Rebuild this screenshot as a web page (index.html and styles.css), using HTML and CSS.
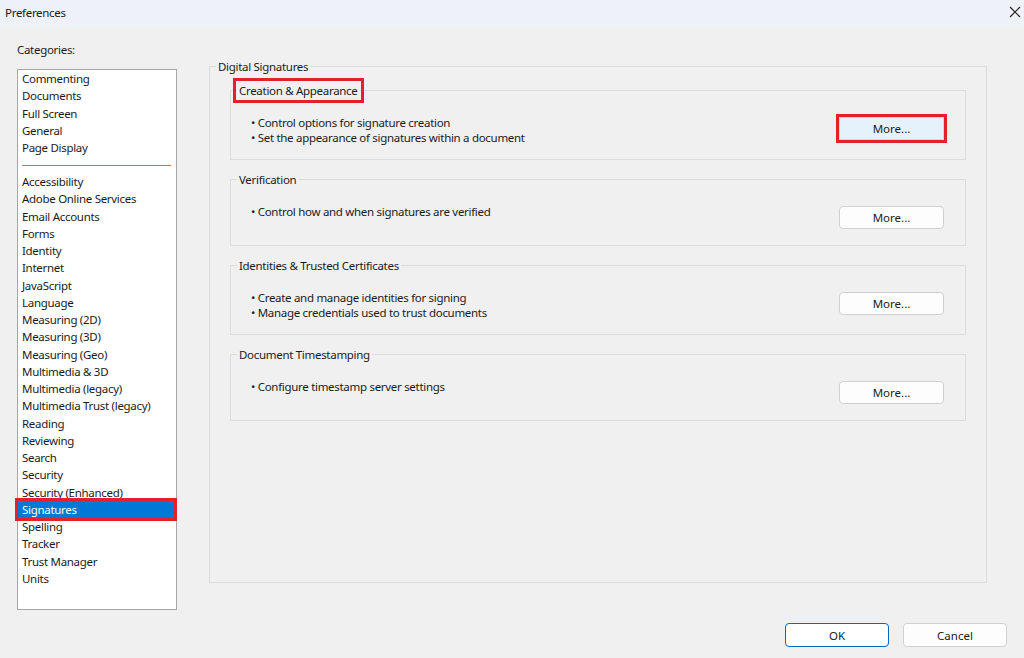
FILE: index.html
```html
<!DOCTYPE html>
<html lang="en">
<head>
    <meta charset="UTF-8">
    <title>Preferences</title>
    <link rel="stylesheet" href="styles.css">
</head>
<body>
    <div class="window">
        <div class="titlebar">
            <span class="title">Preferences</span>
            <svg class="close" width="12" height="12" viewBox="0 0 12 12">
                <path d="M1 1L11 11M11 1L1 11" stroke="#222" stroke-width="1.2" fill="none"/>
            </svg>
        </div>

        <div class="main">
            <div class="sidebar">
                <div class="cat-label">Categories:</div>
                <ul class="cat-list">
                    <li>Commenting</li>
                    <li>Documents</li>
                    <li>Full Screen</li>
                    <li>General</li>
                    <li>Page Display</li>
                    <li class="sep"></li>
                    <li>Accessibility</li>
                    <li>Adobe Online Services</li>
                    <li>Email Accounts</li>
                    <li>Forms</li>
                    <li>Identity</li>
                    <li>Internet</li>
                    <li>JavaScript</li>
                    <li>Language</li>
                    <li>Measuring (2D)</li>
                    <li>Measuring (3D)</li>
                    <li>Measuring (Geo)</li>
                    <li>Multimedia &amp; 3D</li>
                    <li>Multimedia (legacy)</li>
                    <li>Multimedia Trust (legacy)</li>
                    <li>Reading</li>
                    <li>Reviewing</li>
                    <li>Search</li>
                    <li>Security</li>
                    <li>Security (Enhanced)</li>
                    <li class="selected">Signatures</li>
                    <li>Spelling</li>
                    <li>Tracker</li>
                    <li>Trust Manager</li>
                    <li>Units</li>
                </ul>
            </div>

            <fieldset class="panel">
                <legend>Digital Signatures</legend>
                <div class="groups">
                    <fieldset class="group">
                        <legend class="marked">Creation &amp; Appearance</legend>
                        <div class="group-body">
                            <ul class="bullets">
                                <li>• Control options for signature creation</li>
                                <li>• Set the appearance of signatures within a document</li>
                            </ul>
                            <button class="more hover marked">More...</button>
                        </div>
                    </fieldset>
                    <fieldset class="group">
                        <legend>Verification</legend>
                        <div class="group-body">
                            <ul class="bullets">
                                <li>• Control how and when signatures are verified</li>
                            </ul>
                            <button class="more">More...</button>
                        </div>
                    </fieldset>
                    <fieldset class="group">
                        <legend>Identities &amp; Trusted Certificates</legend>
                        <div class="group-body">
                            <ul class="bullets">
                                <li>• Create and manage identities for signing</li>
                                <li>• Manage credentials used to trust documents</li>
                            </ul>
                            <button class="more">More...</button>
                        </div>
                    </fieldset>
                    <fieldset class="group">
                        <legend>Document Timestamping</legend>
                        <div class="group-body">
                            <ul class="bullets">
                                <li>• Configure timestamp server settings</li>
                            </ul>
                            <button class="more">More...</button>
                        </div>
                    </fieldset>
                </div>
            </fieldset>
        </div>

        <div class="footer">
            <button class="btn default">OK</button>
            <button class="btn">Cancel</button>
        </div>
    </div>
</body>
</html>
```

FILE: styles.css
```css
*{
    box-sizing: border-box;
}
body{
    margin: 0;
    background: #f0f0f0;
    font-family: "Noto Sans", "Open Sans", sans-serif;
    font-size: 11.5px;
    letter-spacing: -0.3px;
    color: #1b1b1b;
}
.window{
    width: 1024px;
    height: 658px;
    display: flex;
    flex-direction: column;
}
.titlebar{
    height: 27px;
    background: #eef2f8;
    display: flex;
    justify-content: space-between;
    align-items: flex-start;
    padding: 4px 3px 0 5px;
    line-height: 17px;
}
.titlebar .close{
    margin-top: 2px;
}
.main{
    flex: 1;
    display: flex;
    align-items: flex-start;
    padding-left: 17px;
}

/* categories */
.sidebar{
    width: 160px;
}
.cat-label{
    margin-top: 14px;
    line-height: 17px;
}
.cat-list{
    list-style: none;
    margin: 11px 0 0;
    padding: 0;
    height: 541px;
    background: #fff;
    border: 1px solid #a6a6a6;
}
.cat-list li{
    height: 17.25px;
    line-height: 17.25px;
    padding-left: 4px;
    white-space: nowrap;
}
.cat-list .sep{
    height: 1px;
    margin: 9px 5px 6.75px 4px;
    padding: 0;
    background: #4a94dc;
}
.cat-list .selected{
    background: #0078d7;
    color: #fff;
    margin-right: 2px;
    outline: 3px solid #e5202b;
}

/* right panel */
.panel{
    margin: 30.5px 0 0 32px;
    width: 778px;
    height: 525px;
    padding: 7px 20px 0 6px;
    border: 1px solid #dcdcdc;
    min-width: 0;
}
legend{
    padding: 0 2px;
    line-height: 17px;
}
.groups{
    margin-left: 14px;
}
.group{
    margin: 0 0 10.5px;
    padding: 0;
    border: 1px solid #dcdcdc;
    min-width: 0;
}
.group legend{
    margin-left: 6px;
}
.group-body{
    display: flex;
    justify-content: space-between;
    align-items: flex-start;
    padding: 16.5px 21px 14px 20px;
}
.bullets{
    list-style: none;
    margin: 0;
    padding: 0;
}
.bullets li{
    line-height: 15px;
}
.marked{
    outline: 3px solid #e5202b;
    outline-offset: 1px;
}
.more{
    width: 105px;
    height: 23px;
    margin: 2px 0 2px;
    font: inherit;
    color: #1b1b1b;
    background: #fdfdfd;
    border: 1px solid #d0d0d0;
    border-radius: 4px;
}
.more.hover{
    background: #e5f1fb;
    border-color: #c4dcf3;
    border-radius: 0;
    outline-offset: 0;
}

/* bottom buttons */
.footer{
    display: flex;
    justify-content: flex-end;
    gap: 14px;
    padding: 0 17px 11px 0;
}
.btn{
    width: 104px;
    height: 24px;
    font: inherit;
    color: #1b1b1b;
    background: #fdfdfd;
    border: 1px solid #d0d0d0;
    border-radius: 4px;
}
.btn.default{
    border: 1.5px solid #0067c0;
    background: #fff;
}
```
